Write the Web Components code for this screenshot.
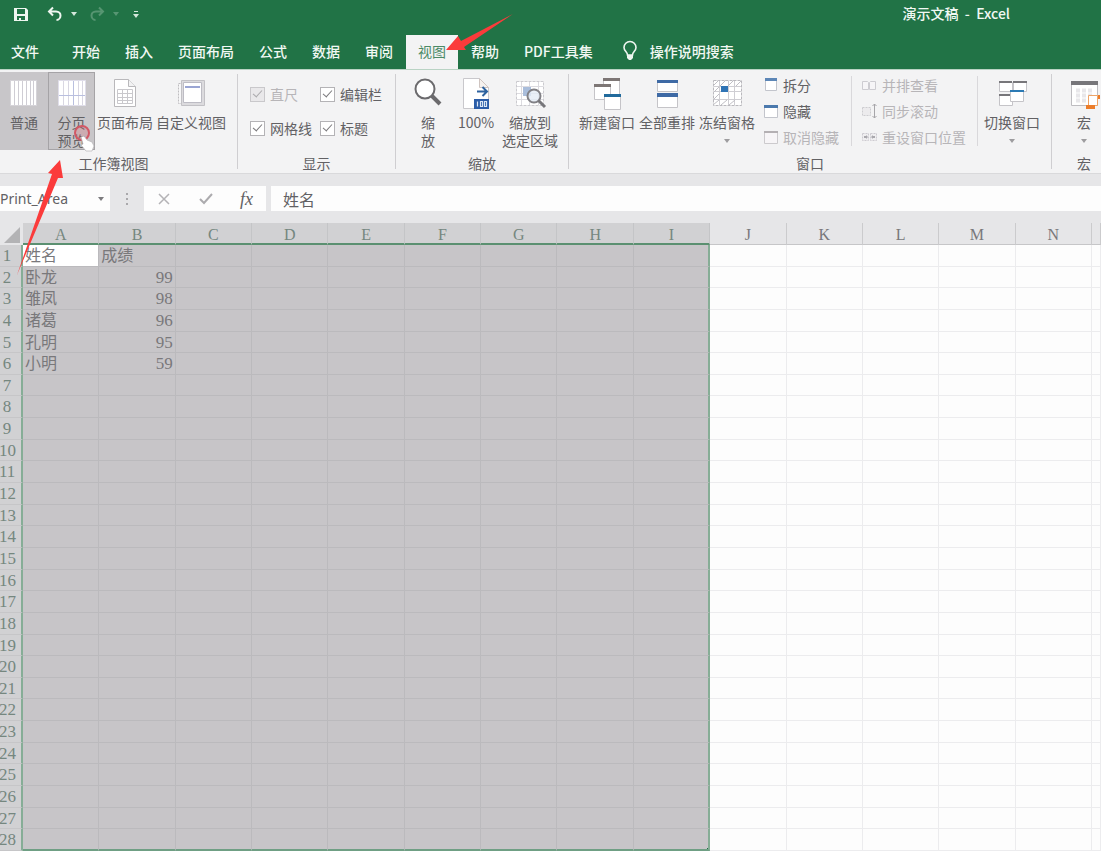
<!DOCTYPE html>
<html lang="zh-CN">
<head>
<meta charset="utf-8">
<title>演示文稿 - Excel</title>
<style>
  html, body { margin: 0; height: 100%; }
  body {
    font-family: "Noto Sans CJK SC", "Noto Sans", sans-serif;
    font-size: 14px;
    color: #626164;
    background: #e6e6e8;
    overflow: hidden;
  }
</style>
</head>
<body>
<xl-app></xl-app>
<script>
const define = (name, html, setup) => {
  const template = document.createElement('template');
  template.innerHTML = html;
  customElements.define(name, class extends HTMLElement {
    constructor() {
      super();
      this.attachShadow({ mode: 'open' }).append(template.content.cloneNode(true));
    }
    connectedCallback() { if (setup) setup(this, this.shadowRoot); }
  });
};

const ICONS = {
  save: [16, 16, `<path fill="#eef6f0" fill-rule="evenodd" d="M1 2h12l2 2v11H1zM4 3v5h8V3zM4 10v4h2v-2h2v2h4v-4z"/>`],
  undo: [16, 16, `<path fill="none" stroke="#eef6f0" stroke-width="2" d="M6 1.500L2 5.500l4 4M2.500 5.500H9c3 0 4.500 2 4.500 4S12 14 9.500 14"/>`],
  redo: [16, 16, `<g opacity=".3"><path fill="none" stroke="#cfe5d8" stroke-width="2" d="M10 1.500l4 4-4 4M13.500 5.500H7c-3 0-4.500 2-4.500 4S4 14 6.500 14"/></g>`],
  caret: [6, 4, `<path fill="currentColor" d="M0 0h6L3 4z"/>`],
  custom: [6, 8, `<path fill="currentColor" d="M1 1h4v1H1zM0 4h6L3 8z"/>`],
  bulb: [16, 20, `<path fill="none" stroke="#eef6f0" stroke-width="1.600" d="M5.500 14c0-3-3.500-4-3.500-7.500a6 6 0 0 1 12 0c0 3.500-3.500 4.500-3.500 7.500z"/><path fill="#eef6f0" d="M5 14h6v3l-2 2H7l-2-2z"/>`],
  normal: [32, 32, `<path fill="#fff" stroke="#d5d3d8" d="M2.500 3.500h26v25h-26z"/><path stroke="#cfcdd4" d="M6.500 4v24M10.500 4v24M14.500 4v24M18.500 4v24M22.500 4v24M25.500 4v24"/>`],
  pagebreak: [32, 32, `<path fill="#fff" stroke="#e0deea" d="M2.500 3.500h27v25h-27z"/><path stroke="#d9d7e2" d="M7.500 4v24M12.500 4v24M22.500 4v24M26.500 4v24"/><path stroke="#b9bfdf" d="M17.500 4v24M3 18.500h26"/>`],
  layout: [32, 32, `<path fill="#fff" stroke="#b9b8bb" d="M5.500 2.500h14l7 7v20h-21z"/><path fill="#f2f2f3" stroke="#b9b8bb" d="M19.500 2.500v7h7"/><path fill="none" stroke="#c9c8cc" d="M8.500 12.500h15v14h-15zM8.500 16.500h15M8.500 20.500h15M8.500 23.500h15M13.500 12.500v14M18.500 12.500v14"/>`],
  views: [32, 32, `<path fill="#f7f7f8" stroke="#bebdc0" stroke-dasharray="2 1" d="M3.500 6.500h4v20h-4z"/><path fill="#dcdbde" stroke="#c2c1c5" d="M6.500 3.500h23v25h-23z"/><path fill="#fff" stroke="#bdbcc4" d="M8.500 5.500h18v20h-18z"/><path fill="#9aa5d3" d="M10 9h15v2H10z"/>`],
  zoom: [32, 32, `<circle cx="13" cy="12" r="9.500" fill="#fff" stroke="#6b6a6d" stroke-width="2"/><path stroke="#6b6a6d" stroke-width="4" d="M19.500 18.500L28 27"/>`],
  hundred: [32, 32, `<path fill="#fff" stroke="#c9c8cc" d="M3.500 1.500h16l9 9v21h-25z"/><path fill="#f5f1ee" stroke="#cfc4c0" d="M19.500 1.500l9 9h-9z"/><path fill="none" stroke="#2e639f" stroke-width="2" d="M17 14.500h10M22.500 10l4.500 4.500-4.500 4.500"/><path fill="#2b5da8" d="M14 22h15v10H14z"/><path fill="none" stroke="#dbe7f5" stroke-width="1.200" d="M17.500 24.500v5M20.500 24.500h2v5h-2zM24.500 24.500h2v5h-2z"/>`],
  zoomsel: [32, 32, `<path fill="#fff" stroke="#cbcacf" stroke-dasharray="3 1" d="M2.500 4.500h27v24h-27z"/><path stroke="#dcdbe0" d="M7.500 5v23M24.500 5v23M3 9.500h26M3 22.500h26M15.500 5v23M3 16.500h26"/><path fill="#a9bddb" d="M9 10h8v9H9z"/><circle cx="20" cy="19" r="6.500" fill="#e3ebf5" fill-opacity=".8" stroke="#828186" stroke-width="2"/><path stroke="#77767a" stroke-width="3" d="M24.500 23.500l6.500 6.500"/>`],
  newwin: [32, 32, `<g fill="#fff" stroke="#c5c4c8"><path d="M12.500 2.500h16v18h-16z"/><path d="M3.500 8.500h16v14h-16z"/><path d="M13.500 18.500h16v14h-16z"/></g><path fill="#7d7675" d="M12 1h17v3H12zM3 7h17v3H3z"/><path fill="#216a9c" d="M13 17h17v3H13z"/>`],
  arrange: [32, 32, `<g fill="#fff" stroke="#c5c4c8"><path d="M6.500 3.500h20v11h-20z"/><path d="M6.500 17.500h20v13h-20z"/></g><path fill="#3e6aa5" d="M6 3h21v3H6zM6 16h21v4H6z"/>`],
  freeze: [32, 32, `<path fill="#fff" stroke="#b9b8bd" stroke-dasharray="3 1" d="M2.500 3.500h28v25h-28z"/><path fill="none" stroke="#cfced3" d="M8.500 4v24M17.500 4v24M23.500 4v24M3 14.500h27M3 22.500h27M3 9.500h27"/><path stroke="#c0bfc5" d="M2 9l6-6M9 9l6-6M17 9l6-6M25 9l5-5M2 16l6-6M2 23l6-6M2 28l6-5M10 28l6-5M18 28l6-5"/><path fill="#2f74b5" d="M10 9h7v6h-7z"/>`],
  split: [14, 14, `<path fill="#fff" stroke="#c3c5cc" d="M1.500 1.500h11v11h-11z"/><path fill="#5c86b6" d="M1 0h12v3H1z"/>`],
  hide: [14, 14, `<path fill="#fff" stroke="#c3c5cc" d="M.5 1.500h13v12H.5z"/><path fill="#4b79ad" d="M0 1h14v3H0z"/>`],
  unhide: [14, 14, `<path fill="#f7f5f7" stroke="#cccacd" d="M.5 1.500h13v12H.5z"/><path fill="#b4b0b3" d="M0 1h14v2H0z"/>`],
  side: [16, 14, `<path fill="#f6f5f7" stroke="#cdccd1" d="M1.500 3.500h5l1 1v7h-6zM14.500 3.500h-5l-1 1v7h6z"/>`],
  sync: [16, 16, `<path fill="#ecebed" stroke="#cdccd0" stroke-dasharray="2 1" d="M1.500 4.500h8v8h-8z"/><path fill="none" stroke="#a6a5a9" d="M13.500 1v14M11.500 3l2-2 2 2M11.500 13l2 2 2-2"/>`],
  reset: [16, 14, `<path fill="#efeef0" stroke="#cccbd0" stroke-dasharray="2 1" d="M1.500 3.500h6v7h-6zM9.500 3.500h6v7h-6z"/><path fill="#a9a8ad" d="M3 6h2V5l2 2-2 2V8H3zM14 6h-2V5l-2 2 2 2V8h2z"/>`],
  switchwin: [32, 32, `<g fill="#fff" stroke="#c5c4c8"><path d="M3.500 5.500h13v9h-13z"/><path d="M17.500 5.500h13v9h-13z"/><path d="M3.500 17.500h13v11h-13z"/><path d="M14.500 14.500h13v10h-13z"/></g><path fill="#77767a" d="M3 4h13v2H3zM17 4h14v2H17zM3 17h11v2H3z"/><path fill="#2c7ab4" d="M14 13h14v2H14z"/>`],
  macro: [32, 32, `<path fill="#fff" stroke="#bebdc1" d="M3.500 5.500h26v23h-26z"/><path stroke="#e8e7ea" stroke-width="4" stroke-dasharray="4 2" d="M8 13.500h18M8 18.500h18M8 23.500h12"/><path fill="#77767a" d="M3 4h27v4H3z"/><path fill="#fff" stroke="#efa467" d="M20.500 18.500h9v10h-9z"/><path fill="#ec7d2a" d="M18 28h9v4h-9zM30 18h2v4h-2z"/>`],
  cancel: [14, 14, `<path stroke="#b4b3b6" stroke-width="1.500" d="M2 2l10 10M12 2L2 12"/>`],
  enter: [16, 14, `<path fill="none" stroke="#acabae" stroke-width="2" d="M2 7l4 4 8-9"/>`],
  dots: [4, 14, `<path fill="#a9a8ab" d="M1 1h2v2H1zM1 6h2v2H1zM1 11h2v2H1z"/>`],
};

define('xl-icon', `<style>:host{display:block;flex:none}svg{display:block;overflow:visible}</style>`, (el, root) => {
  const [w, h, body] = ICONS[el.getAttribute('name')];
  root.innerHTML += `<svg width="${w}" height="${h}" viewBox="0 0 ${w} ${h}" aria-hidden="true">${body}</svg>`;
});

define('xl-titlebar', `
<style>
  :host { display: flex; align-items: center; height: 28px; padding: 0 91px 0 13px; background: #217346; color: #f1f8f3; }
  button { display: flex; border: 0; padding: 0; background: none; color: #d5e8dc; }
  .tools { display: flex; align-items: center; gap: 8px; flex: 1; }
  .undo { margin-left: 10px; }
  .redo { margin-left: 4px; }
  .faint { opacity: .3; }
  .more { margin-left: 6px; }
  h1 { margin: 0; font-size: 14px; line-height: 20px; font-weight: 500; white-space: pre; padding-bottom: 2px; }
</style>
<div class="tools">
  <button aria-label="保存"><xl-icon name="save"></xl-icon></button>
  <button class="undo" aria-label="撤消"><xl-icon name="undo"></xl-icon></button>
  <button aria-label="撤消列表"><xl-icon name="caret"></xl-icon></button>
  <button class="redo" aria-label="恢复"><xl-icon name="redo"></xl-icon></button>
  <button class="faint" aria-label="恢复列表"><xl-icon name="caret"></xl-icon></button>
  <button class="more" aria-label="自定义快速访问工具栏"><xl-icon name="custom"></xl-icon></button>
</div>
<h1>演示文稿  -  Excel</h1>`);

define('xl-tab', `
<style>
  :host { display: block; }
  button { display: block; height: 34px; border: 0; padding: 0 12px 2px; background: none; color: #f1f8f3; font: 500 14px/20px "Noto Sans CJK SC", sans-serif; white-space: nowrap; }
  :host([selected]) button { background: #f3f3f4; color: #4b8a66; font-weight: 400; }
</style>
<button role="tab"><slot></slot></button>`);

define('xl-tabs', `
<style>
  :host { display: flex; align-items: flex-end; gap: 1px; height: 41px; background: #217346; box-sizing: border-box; }
  .file { margin: 0 8px 0 -1px; }
  .search { display: flex; align-items: center; gap: 12px; height: 34px; margin-left: 16px; border: 0; padding: 0 0 2px; background: none; color: #f1f8f3; font: 500 14px/20px "Noto Sans CJK SC", sans-serif; }
</style>
<xl-tab class="file">文件</xl-tab><xl-tab>开始</xl-tab><xl-tab>插入</xl-tab><xl-tab>页面布局</xl-tab><xl-tab>公式</xl-tab><xl-tab>数据</xl-tab><xl-tab>审阅</xl-tab><xl-tab selected>视图</xl-tab><xl-tab>帮助</xl-tab><xl-tab>PDF工具集</xl-tab>
<button class="search"><xl-icon name="bulb"></xl-icon><span>操作说明搜索</span></button>`);

define('xl-group', `
<style>
  :host { display: flex; flex-direction: column; box-sizing: border-box; flex: none; border-right: 1px solid #cfced1; margin: 5px 0 4px; }
  :host([last]) { border: 0; }
  .body { display: flex; height: 84px; }
  footer { text-align: center; line-height: 10px; padding-right: var(--label-inset, 0); }
</style>
<div class="body"><slot></slot></div>
<footer></footer>`, (el, root) => { root.querySelector('footer').textContent = el.getAttribute('label'); });

define('xl-big', `
<style>
  :host { display: block; flex: none; margin-top: -2px; }
  button { display: flex; flex-direction: column; align-items: center; width: 100%; height: 78px; box-sizing: border-box; border: 0; padding: 5px 0 0; background: none; color: inherit; font: 14px/18px "Noto Sans CJK SC", sans-serif; white-space: nowrap; }
  span { margin-top: 4px; }
  :host([on]) button { background: #c8c6c9; }
  :host([hot]) button { background: #c8c6c9; box-shadow: inset 0 0 0 1px #a5a3a6; }
  .caret { margin-top: 8px; color: #9d9c9f; }
</style>
<button><span><slot></slot></span></button>`, (el, root) => {
  const button = root.querySelector('button');
  button.insertAdjacentHTML('afterbegin', `<xl-icon name="${el.getAttribute('icon')}"></xl-icon>`);
  if (el.hasAttribute('menu')) button.insertAdjacentHTML('beforeend', `<xl-icon class="caret" name="caret"></xl-icon>`);
});

define('xl-small', `
<style>
  :host { display: block; }
  button { display: flex; align-items: center; gap: 5px; height: 26px; border: 0; padding: 0; background: none; color: inherit; font: 14px/18px "Noto Sans CJK SC", sans-serif; white-space: nowrap; }
  button:disabled { color: #b7b5b8; }
</style>
<button><slot></slot></button>`, (el, root) => {
  const button = root.querySelector('button');
  button.disabled = el.hasAttribute('disabled');
  button.insertAdjacentHTML('afterbegin', `<xl-icon name="${el.getAttribute('icon')}"></xl-icon>`);
});

define('xl-check', `
<style>
  :host { display: block; }
  label { display: flex; align-items: center; gap: 5px; line-height: 18px; white-space: nowrap; }
  input { appearance: none; display: flex; justify-content: center; width: 15px; height: 15px; margin: 0; box-sizing: border-box; border: 1px solid #b4b3b6; background: #fff; }
  input:checked::before { content: ""; width: 4px; height: 8px; border: solid #7b7a7d; border-width: 0 1px 1px 0; transform: rotate(42deg); }
  input:disabled { background: #e9e8ea; border-color: #c9c8cb; }
  input:disabled::before { border-color: #acabae; }
  input:disabled + span { color: #b7b5b8; }
</style>
<label><input type="checkbox" checked><span><slot></slot></span></label>`, (el, root) => {
  root.querySelector('input').disabled = el.hasAttribute('disabled');
});

define('xl-ribbon', `
<style>
  :host { display: flex; height: 105px; box-sizing: border-box; background: #f3f3f4; border-bottom: 1px solid #d9d9db; box-shadow: inset 0 1px #b9d3c4; overflow: hidden; }
  .views { width: 238px; --label-inset: 10px; }
  .show { width: 158px; }
  .zooms { width: 173px; }
  .windows { width: 483px; }
  .macros { width: 64px; }
  .w47 { width: 47px; } .w48 { width: 48px; } .w60 { width: 60px; } .w64 { width: 64px; } .w72 { width: 72px; }
  .checks { display: grid; grid-template-columns: 70px auto; grid-auto-rows: 34px; align-items: center; align-content: start; margin: 3px 0 0 12px; }
  .list { display: flex; flex-direction: column; }
  xl-small { position: static; }
  .list xl-small:first-child { margin-top: -2px; }
  .first { margin-left: 8px; }
  .sep { border-left: 1px solid #d9d8db; padding-left: 9px; height: 70px; margin-top: 2px; }
  .sep.list xl-small:first-child { margin-top: -4px; }
  .sep xl-big { margin-top: -4px; }
  .a { margin-left: 7px; width: 87px; }
  .b { width: 116px; }
  .c { padding-left: 4px; }
</style>
<xl-group class="views" label="工作簿视图">
  <xl-big class="w48" icon="normal" on>普通</xl-big>
  <xl-big class="w47" icon="pagebreak" hot>分页<br>预览</xl-big>
  <xl-big class="w60" icon="layout">页面布局</xl-big>
  <xl-big class="w72" icon="views">自定义视图</xl-big>
</xl-group>
<xl-group class="show" label="显示">
  <div class="checks"><xl-check disabled>直尺</xl-check><xl-check>编辑栏</xl-check><xl-check>网格线</xl-check><xl-check>标题</xl-check></div>
</xl-group>
<xl-group class="zooms" label="缩放">
  <xl-big class="first w48" icon="zoom">缩<br>放</xl-big>
  <xl-big class="w48" icon="hundred">100%</xl-big>
  <xl-big class="w60" icon="zoomsel">缩放到<br>选定区域</xl-big>
</xl-group>
<xl-group class="windows" label="窗口">
  <xl-big class="first w60" icon="newwin">新建窗口</xl-big>
  <xl-big class="w60" icon="arrange">全部重排</xl-big>
  <xl-big class="w60" icon="freeze" menu>冻结窗格</xl-big>
  <div class="list a"><xl-small icon="split">拆分</xl-small><xl-small icon="hide">隐藏</xl-small><xl-small icon="unhide" disabled>取消隐藏</xl-small></div>
  <div class="list b sep"><xl-small icon="side" disabled>并排查看</xl-small><xl-small icon="sync" disabled>同步滚动</xl-small><xl-small icon="reset" disabled>重设窗口位置</xl-small></div>
  <div class="sep c"><xl-big class="w60" icon="switchwin" menu>切换窗口</xl-big></div>
</xl-group>
<xl-group class="macros" label="宏" last><xl-big class="w64" icon="macro" menu>宏</xl-big></xl-group>`);

define('xl-formula', `
<style>
  :host { display: flex; align-items: center; height: 49px; box-sizing: border-box; }
  .name, .keys, .value { height: 25px; background: #fdfdfd; display: flex; align-items: center; box-sizing: border-box; }
  .name { width: 110px; padding-right: 6px; color: #7c7b7e; }
  input { min-width: 0; flex: 1; border: 0; padding: 0; background: none; color: #626164; font: 14px/20px "Noto Sans CJK SC", sans-serif; }
  .name input { font-family: "Noto Sans", sans-serif; }
  button { display: flex; border: 0; padding: 0; background: none; color: inherit; }
  .dots { margin: 0 15px; }
  .keys { width: 122px; justify-content: space-between; padding: 0 13px; }
  .fx { font: italic 18px/20px "Liberation Serif", serif; color: #626164; }
  .value { flex: 1; margin-left: 5px; padding-left: 12px; }
  .value input { font-size: 16px; }
</style>
<div class="name"><input aria-label="名称框" value="Print_Area"><button aria-label="名称列表"><xl-icon name="caret"></xl-icon></button></div>
<xl-icon class="dots" name="dots"></xl-icon>
<div class="keys"><button aria-label="取消"><xl-icon name="cancel"></xl-icon></button><button aria-label="输入"><xl-icon name="enter"></xl-icon></button><button class="fx">fx</button></div>
<div class="value"><input aria-label="编辑栏" value="姓名"></div>`);

define('xl-sheet', `
<style>
  :host { display: flex; flex: 1; min-height: 0; color: #79787b; }
  table { flex: 1; min-height: 0; display: grid; grid-template-columns: 23px repeat(14, minmax(76px, 1fr)) 9px; grid-template-rows: 22px repeat(28, minmax(21px, 1fr)); font: 17px/20px "Liberation Serif", "Noto Sans CJK SC", serif; }
  thead, tbody, tr { display: contents; }
  th, td { box-sizing: border-box; padding: 0; min-width: 0; min-height: 0; overflow: hidden; font-weight: 400; white-space: nowrap; }
  thead th { border-right: 1px solid #cbcbcd; border-bottom: 1px solid #c6c6c8; line-height: 24px; text-align: center; font-size: 16px; }
  thead th.sel { background: #d1d1d3; border-color: #c4c5c7; border-bottom: 2px solid #5b9071; color: #75877f; }
  thead th.corner { border: 0; display: flex; align-items: flex-end; justify-content: flex-end; padding: 0 3px 2px 0; }
  .corner i { width: 16px; height: 16px; background: #b3b3b5; clip-path: polygon(100% 0, 100% 100%, 0 100%); }
  tbody th { padding-right: 7px; background: #d1d1d3; border-bottom: 1px solid #c6c6c8; border-right: 2px solid #86ad96; color: #75877f; line-height: 22px; text-align: center; }
  tbody th.wide { padding: 0; text-align: left; text-indent: -1px; }
  td { background: #fdfdfd; border-right: 1px solid #ececee; border-bottom: 1px solid #ececee; line-height: 22px; }
  td.sel { background: #c7c5c8; border-color: #bbbabd; }
  td.edge { border-right: 2px solid #86ad96; }
  td.base { border-bottom: 2px solid #6f9f84; }
  td.active { background: #fff; }
  td.text { padding-left: 2px; font-size: 16px; }
  td.num { text-align: right; padding-right: 2px; }
  td.handle { background: linear-gradient(#1f7044, #1f7044) right bottom / 3px 3px no-repeat border-box, #c7c5c8; }
</style>
<table><thead></thead><tbody></tbody></table>`, (el, root) => {
  const letters = [...'ABCDEFGHIJKLMN', ''];
  const data = [['姓名', '成绩'], ['卧龙', 99], ['雏凤', 98], ['诸葛', 96], ['孔明', 95], ['小明', 59]];
  root.querySelector('thead').innerHTML = '<tr><th class="corner"><i></i></th>' +
    letters.map((c, i) => `<th class="${i < 9 ? 'sel' : ''}">${c}</th>`).join('') + '</tr>';
  root.querySelector('tbody').innerHTML = Array.from({ length: 28 }, (_, r) =>
    `<tr><th class="${r > 8 ? 'wide' : ''}">${r + 1}</th>` + letters.map((_, c) => {
      const value = data[r]?.[c] ?? '';
      const names = [c < 9 && 'sel', c === 8 && 'edge', c < 9 && r === 27 && 'base', c === 8 && r === 27 && 'handle',
        r === 0 && c === 0 && 'active', typeof value === 'number' ? 'num' : 'text'].filter(Boolean);
      return `<td class="${names.join(' ')}">${value}</td>`;
    }).join('') + '</tr>').join('');
});

/* Red pointer arrows and the mouse pointer, floating over the window. */
define('xl-marks', `
<style>:host { position: absolute; top: 0; left: 0; pointer-events: none; } svg { display: block; }</style>
<svg width="520" height="280" viewBox="0 0 520 280" aria-hidden="true">
  <g fill="#fb3b3b"><path d="M446 50L458 36l3 5 52-27-49 33 2 3z"/><path d="M60 160L48 173l4 1-35 101 41-97h5z"/></g>
  <circle cx="82" cy="133" r="7" fill="#d9606c" fill-opacity=".25" stroke="#d25865" stroke-width="2"/>
  <path fill="#fff" stroke="#b5b3b6" stroke-width=".7" d="M81 137l3-1 3 4 5 2 2 4-2 5h-6l-5-6 2-1z"/>
</svg>`);

define('xl-app', `
<style>:host { display: flex; flex-direction: column; position: relative; height: 100vh; } :host > * { flex-shrink: 0; } xl-titlebar, xl-tabs, xl-ribbon, xl-formula { flex: none; }</style>
<xl-titlebar></xl-titlebar><xl-tabs></xl-tabs><xl-ribbon></xl-ribbon><xl-formula></xl-formula><xl-sheet></xl-sheet><xl-marks></xl-marks>`);
</script>
</body>
</html>
